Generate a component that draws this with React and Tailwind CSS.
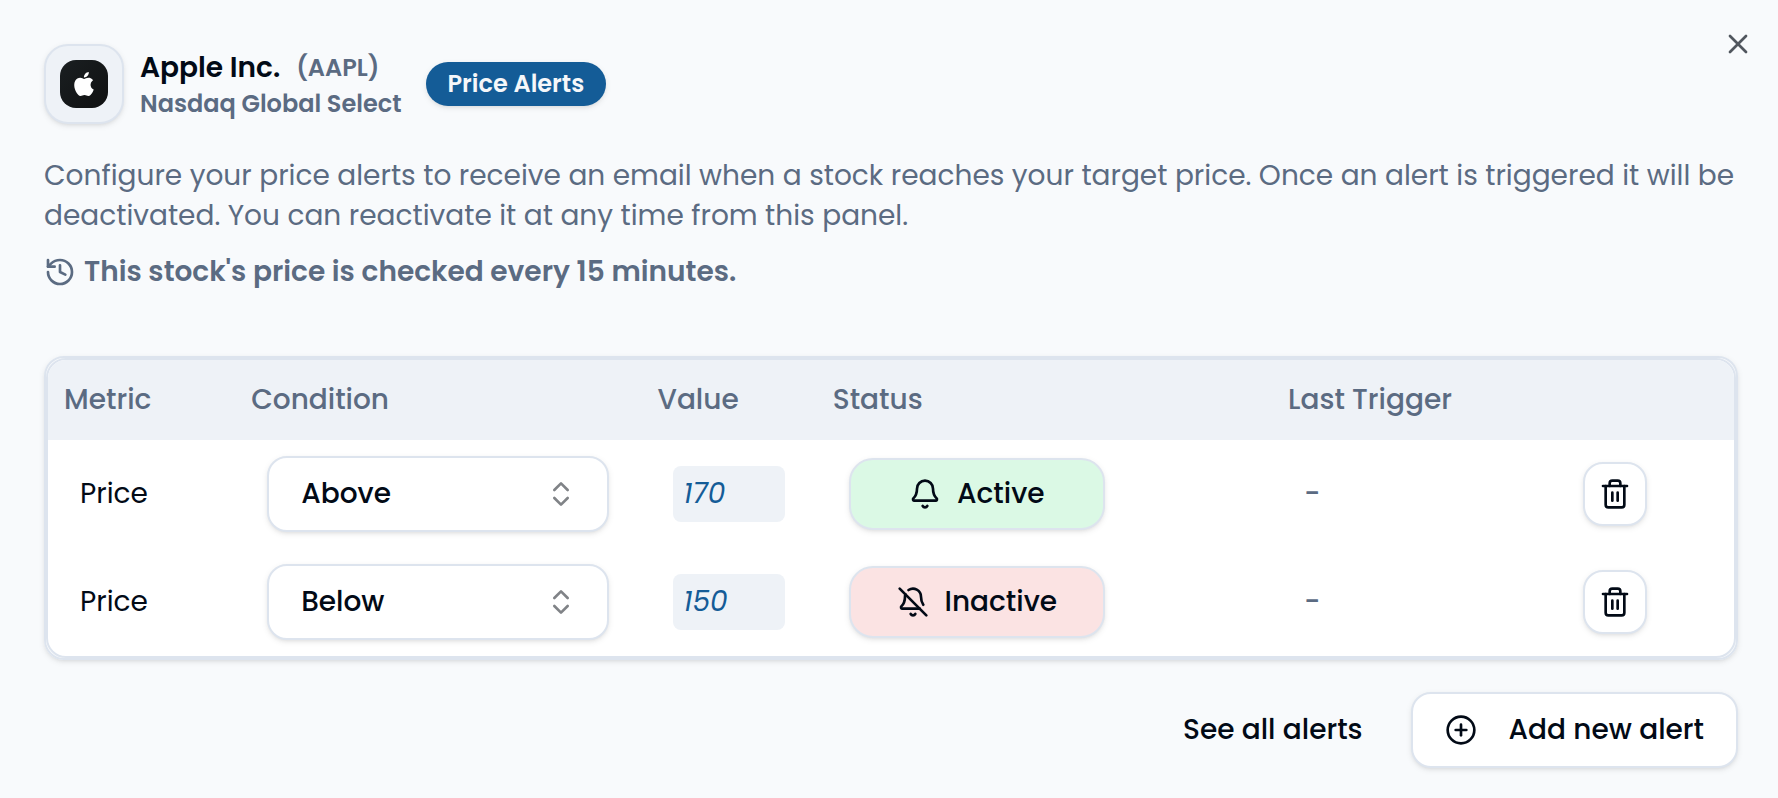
import { useState } from "react";
import { Bell, BellOff, ChevronsUpDown, CirclePlus, History, Trash2, X } from "lucide-react";

const initialAlerts = [
    { id: 1, metric: "Price", condition: "Above", value: "170", active: true, lastTrigger: "-" },
    { id: 2, metric: "Price", condition: "Below", value: "150", active: false, lastTrigger: "-" },
];

const softShadow = "shadow-[0_2px_6px_rgba(0,0,0,0.08),0_2px_4px_-2px_rgba(0,0,0,0.1)]";

const AppleLogo = () => (
    <svg viewBox="0 0 24 24" className="size-6 fill-white" aria-hidden="true">
        <path d="M12.152 6.896c-.948 0-2.415-1.078-3.96-1.04-2.04.027-3.91 1.183-4.961 3.014-2.117 3.675-.546 9.103 1.519 12.09 1.013 1.454 2.208 3.09 3.792 3.039 1.52-.065 2.09-.987 3.935-.987 1.831 0 2.35.987 3.96.948 1.637-.026 2.676-1.48 3.676-2.948 1.156-1.688 1.636-3.325 1.662-3.415-.039-.013-3.182-1.221-3.22-4.857-.026-3.04 2.48-4.494 2.597-4.559-1.429-2.09-3.623-2.324-4.39-2.376-2-.156-3.675 1.09-4.61 1.09zM15.53 3.83c.843-1.012 1.4-2.427 1.245-3.83-1.207.052-2.662.805-3.532 1.818-.78.896-1.454 2.338-1.273 3.714 1.338.104 2.715-.688 3.559-1.701" />
    </svg>
);

const AlertRow = ({ alert, onChange, onDelete }) => {
    const StatusIcon = alert.active ? Bell : BellOff;

    return (
        <tr className="h-[108px]">
            <td className="px-8">{alert.metric}</td>
            <td className="px-8">
                <div className="relative">
                    <select
                        aria-label="Condition"
                        value={alert.condition}
                        onChange={(e) => onChange({ ...alert, condition: e.target.value })}
                        className={`h-[76px] w-full appearance-none rounded-[20px] border-2 border-[#dde4ee] bg-white px-8 font-medium ${softShadow}`}
                    >
                        <option>Above</option>
                        <option>Below</option>
                    </select>
                    <ChevronsUpDown size={32} className="pointer-events-none absolute top-[22px] right-8 text-[#808387]" />
                </div>
            </td>
            <td className="px-8">
                <input
                    type="text"
                    aria-label="Value"
                    value={alert.value}
                    onChange={(e) => onChange({ ...alert, value: e.target.value })}
                    className="block h-14 w-full rounded-lg bg-[#eef2f7] px-[10px] text-[#145c97] italic"
                />
            </td>
            <td className="px-8">
                <button
                    type="button"
                    onClick={() => onChange({ ...alert, active: !alert.active })}
                    className={`flex h-[72px] w-64 items-center justify-center gap-4 rounded-3xl border-2 border-[#dde4ee] font-medium ${softShadow} ${
                        alert.active ? "bg-[#dbf9e5]" : "bg-[#fbe3e3]"
                    }`}
                >
                    <StatusIcon size={32} />
                    {alert.active ? "Active" : "Inactive"}
                </button>
            </td>
            <td className="px-8 font-medium text-[#5b6b82]">{alert.lastTrigger}</td>
            <td className="px-4">
                <button
                    type="button"
                    aria-label="Delete alert"
                    onClick={() => onDelete(alert.id)}
                    className={`flex size-16 items-center justify-center rounded-[20px] border-2 border-[#dde4ee] bg-white ${softShadow}`}
                >
                    <Trash2 size={32} />
                </button>
            </td>
        </tr>
    );
};

const App = () => {
    const [alerts, setAlerts] = useState(initialAlerts);

    const handleChange = (updated) => {
        setAlerts(alerts.map((a) => (a.id === updated.id ? updated : a)));
    };

    const handleDelete = (id) => {
        setAlerts(alerts.filter((a) => a.id !== id));
    };

    const handleAdd = () => {
        setAlerts([
            ...alerts,
            { id: Date.now(), metric: "Price", condition: "Above", value: "", active: true, lastTrigger: "-" },
        ]);
    };

    return (
        <div className="relative min-h-screen bg-[#f8fafc] pt-11 pr-10 pb-[30px] pl-11 font-['Poppins','Inter',sans-serif] text-[28px] leading-10 text-[#020a16]">
            <button type="button" aria-label="Close" className="absolute top-7 right-6 text-[#50565e]">
                <X size={32} />
            </button>

            {/* Company header */}
            <header className="flex items-center">
                <div className={`flex size-20 items-center justify-center rounded-3xl border-2 border-[#dde4ee] bg-[#eef2f7] ${softShadow}`}>
                    <div className="flex size-12 items-center justify-center rounded-2xl bg-linear-to-br from-[#1a1f21] to-[#101112]">
                        <AppleLogo />
                    </div>
                </div>
                <div className="ml-4 pt-1 font-semibold">
                    <h1 className="flex items-center gap-4 leading-9">
                        Apple Inc.
                        <span className="text-2xl leading-9 text-[#5b6b82]">(AAPL)</span>
                    </h1>
                    <p className="text-2xl leading-9 text-[#5b6b82]">Nasdaq Global Select</p>
                </div>
                <span className={`ml-6 flex h-11 items-center rounded-full bg-[#145c97] px-[22px] text-2xl font-semibold text-[#f5f7fa] ${softShadow}`}>
                    Price Alerts
                </span>
            </header>

            <div className="mt-8 text-[#5b6b82]">
                <p>
                    Configure your price alerts to receive an email when a stock reaches your target price. Once an alert is
                    triggered it will be deactivated. You can reactivate it at any time from this panel.
                </p>
                <p className="mt-4 flex items-center gap-2 font-semibold">
                    <History size={32} />
                    This stock's price is checked every 15 minutes.
                </p>
            </div>

            {/* Alerts table */}
            <div className={`mt-16 rounded-[20px] border-2 border-[#dde4ee] ${softShadow}`}>
                <div className="overflow-hidden rounded-[20px] border-2 border-[#dde4ee] bg-white">
                    <table className="w-full table-fixed text-left">
                        <thead className="bg-[#eef2f7] text-[#5b6b82]">
                            <tr className="h-20">
                                <th className="w-[11.1%] px-4 font-medium">Metric</th>
                                <th className="w-[24.1%] px-4 font-medium">Condition</th>
                                <th className="w-[10.4%] px-4 font-medium">Value</th>
                                <th className="w-[27%] px-4 font-medium">Status</th>
                                <th className="w-[17.5%] px-4 font-medium">Last Trigger</th>
                                <th className="px-4" aria-label="Actions"></th>
                            </tr>
                        </thead>
                        <tbody>
                            {alerts.map((alert) => (
                                <AlertRow key={alert.id} alert={alert} onChange={handleChange} onDelete={handleDelete} />
                            ))}
                        </tbody>
                    </table>
                </div>
            </div>

            <footer className="mt-8 flex items-center justify-end gap-4 font-medium">
                <button type="button" className="h-[76px] px-8">
                    See all alerts
                </button>
                <button
                    type="button"
                    onClick={handleAdd}
                    className={`flex h-[76px] items-center gap-8 rounded-[20px] border-2 border-[#dde4ee] bg-white px-8 ${softShadow}`}
                >
                    <CirclePlus size={32} />
                    Add new alert
                </button>
            </footer>
        </div>
    );
};

export default App;
